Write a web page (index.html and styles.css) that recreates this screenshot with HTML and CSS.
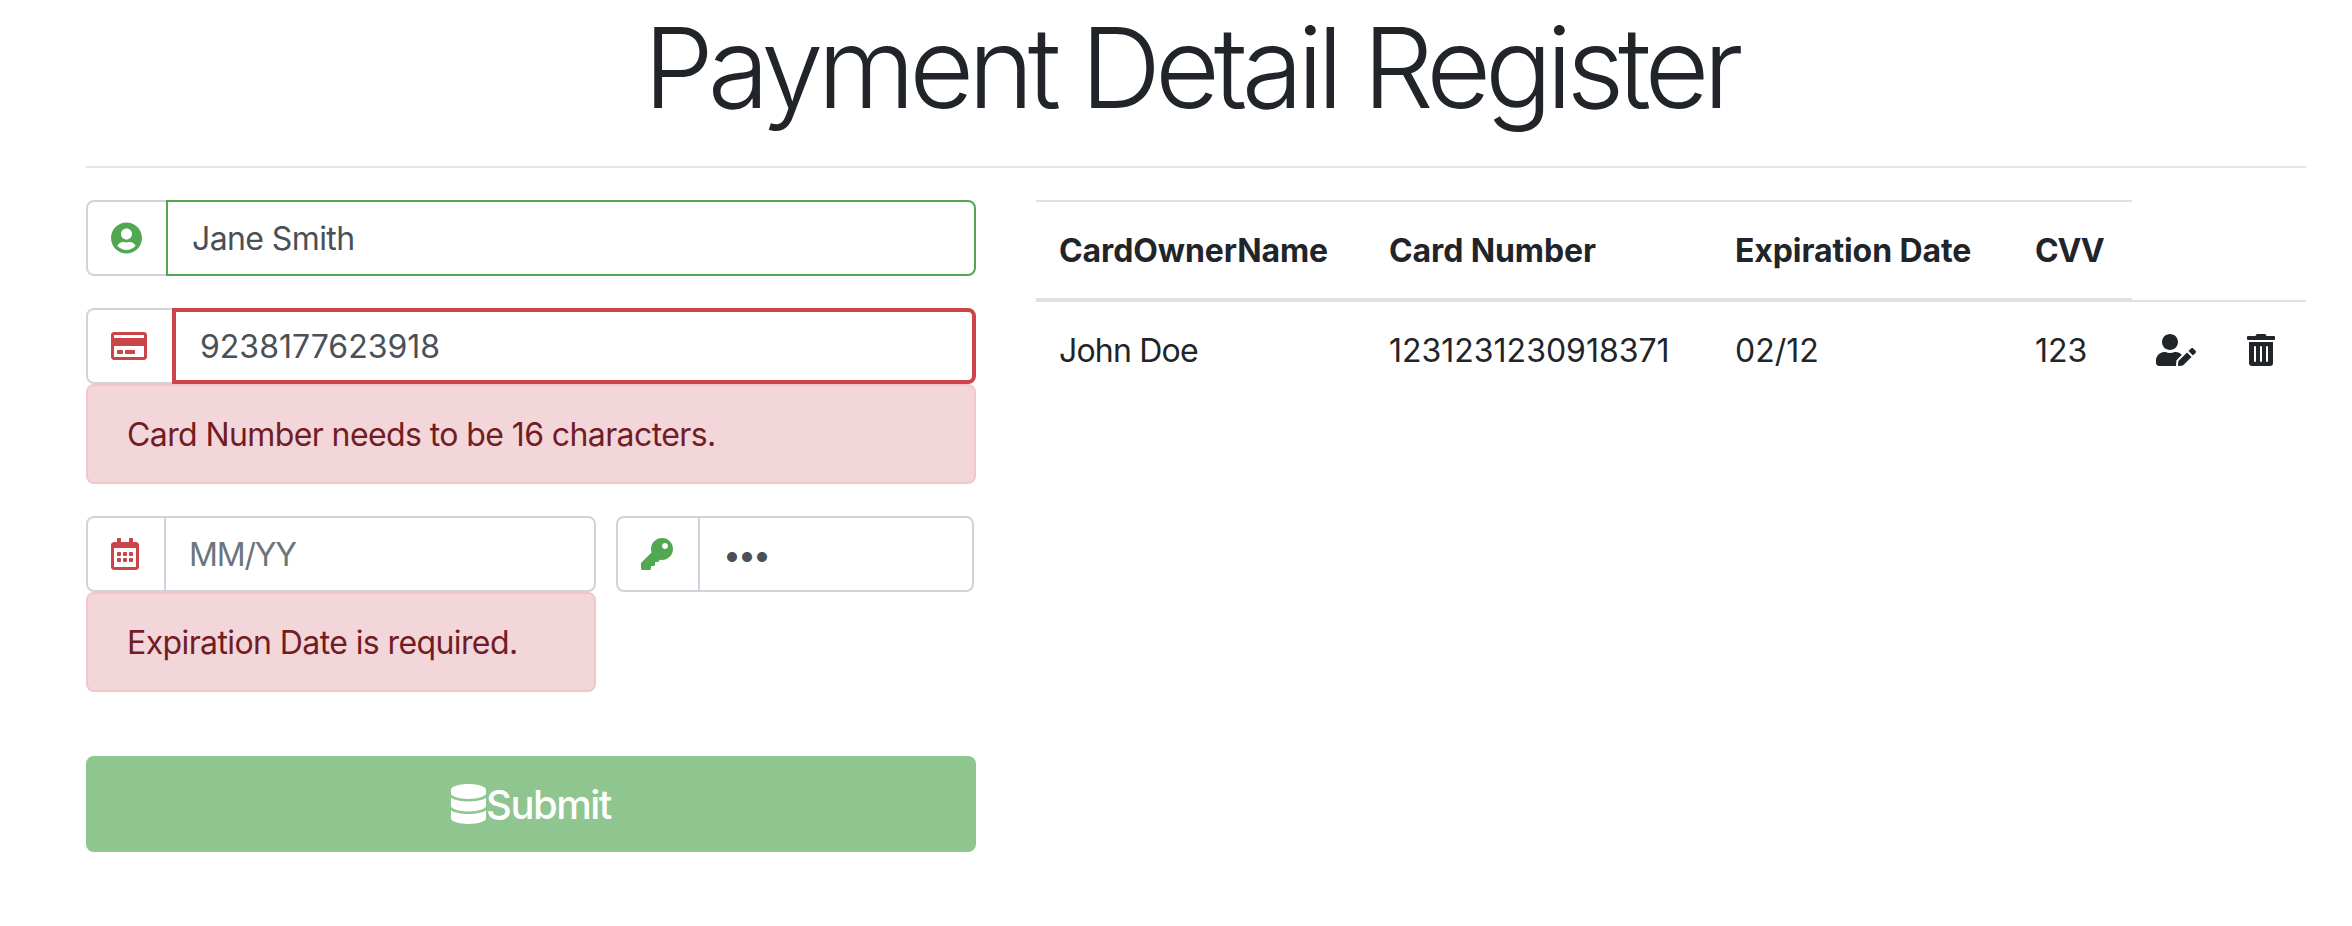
FILE: index.html
```html
<!DOCTYPE html>
<html lang="en">
<head>
    <meta charset="UTF-8">
    <meta name="viewport" content="width=device-width, initial-scale=1.0">
    <title>Payment Detail Register</title>
    <link rel="stylesheet" href="styles.css">
</head>
<body>
    <div class="page">
        <h1>Payment Detail Register</h1>
        <hr>
        <div class="content">
            <form class="payment-form">
                <div class="input-group">
                    <div class="prepend">
                        <svg class="icon green" width="31" height="32" viewBox="0 0 496 512"><path d="M248 8C111 8 0 119 0 256s111 248 248 248 248-111 248-248S385 8 248 8zm0 96c48.6 0 88 39.4 88 88s-39.4 88-88 88-88-39.4-88-88 39.4-88 88-88zm0 344c-58.7 0-111.3-26.6-146.5-68.2 18.8-35.4 55.6-59.8 98.5-59.8 2.4 0 4.8.4 7.1 1.1 13 4.2 26.6 6.9 40.9 6.9 14.3 0 28-2.7 40.9-6.9 2.3-.7 4.7-1.1 7.1-1.1 42.9 0 79.7 24.4 98.5 59.8C359.3 421.4 306.7 448 248 448z"/></svg>
                    </div>
                    <input class="valid" type="text" name="CardOwnerName" value="Jane Smith" placeholder="Full Name">
                </div>

                <div class="input-group spaced">
                    <div class="prepend">
                        <svg class="icon red" width="36" height="32" viewBox="0 0 576 512"><path d="M527.9 32H48.1C21.5 32 0 53.5 0 80v352c0 26.5 21.5 48 48.1 48h479.8c26.6 0 48.1-21.5 48.1-48V80c0-26.5-21.5-48-48.1-48zM54.1 80h467.8c3.3 0 6 2.7 6 6v42H48.1V86c0-3.3 2.7-6 6-6zm467.8 352H54.1c-3.3 0-6-2.7-6-6V256h479.8v170c0 3.3-2.7 6-6 6zM192 332v40c0 6.6-5.4 12-12 12h-72c-6.6 0-12-5.4-12-12v-40c0-6.6 5.4-12 12-12h72c6.6 0 12 5.4 12 12zm192 0v40c0 6.6-5.4 12-12 12H236c-6.6 0-12-5.4-12-12v-40c0-6.6 5.4-12 12-12h136c6.6 0 12 5.4 12 12z"/></svg>
                    </div>
                    <input class="invalid" type="text" name="CardNumber" value="9238177623918" placeholder="16 Digit Card Number">
                </div>
                <div class="alert">Card Number needs to be 16 characters.</div>

                <div class="form-row spaced">
                    <div>
                        <div class="input-group">
                            <div class="prepend">
                                <svg class="icon red" width="28" height="32" viewBox="0 0 448 512"><path d="M148 288h-40c-6.6 0-12-5.4-12-12v-40c0-6.6 5.4-12 12-12h40c6.6 0 12 5.4 12 12v40c0 6.6-5.4 12-12 12zm108-12v-40c0-6.6-5.4-12-12-12h-40c-6.6 0-12 5.4-12 12v40c0 6.6 5.4 12 12 12h40c6.6 0 12-5.4 12-12zm96 0v-40c0-6.6-5.4-12-12-12h-40c-6.6 0-12 5.4-12 12v40c0 6.6 5.4 12 12 12h40c6.6 0 12-5.4 12-12zm-96 96v-40c0-6.6-5.4-12-12-12h-40c-6.6 0-12 5.4-12 12v40c0 6.6 5.4 12 12 12h40c6.6 0 12-5.4 12-12zm-96 0v-40c0-6.6-5.4-12-12-12h-40c-6.6 0-12 5.4-12 12v40c0 6.6 5.4 12 12 12h40c6.6 0 12-5.4 12-12zm192 0v-40c0-6.6-5.4-12-12-12h-40c-6.6 0-12 5.4-12 12v40c0 6.6 5.4 12 12 12h40c6.6 0 12-5.4 12-12zm96-260v352c0 26.5-21.5 48-48 48H48c-26.5 0-48-21.5-48-48V112c0-26.5 21.5-48 48-48h48V12c0-6.6 5.4-12 12-12h40c6.6 0 12 5.4 12 12v52h128V12c0-6.6 5.4-12 12-12h40c6.6 0 12 5.4 12 12v52h48c26.5 0 48 21.5 48 48zm-48 346V160H48v298c0 3.3 2.7 6 6 6h340c3.3 0 6-2.7 6-6z"/></svg>
                            </div>
                            <input type="text" name="ExpirationDate" placeholder="MM/YY">
                        </div>
                        <div class="alert">Expiration Date is required.</div>
                    </div>
                    <div class="input-group">
                        <div class="prepend">
                            <svg class="icon green" width="32" height="32" viewBox="0 0 512 512"><path d="M512 176.001C512 273.203 433.202 352 336 352c-11.22 0-22.19-1.062-32.827-3.069l-24.012 27.014A23.999 23.999 0 0 1 261.223 384H224v40c0 13.255-10.745 24-24 24h-40v40c0 13.255-10.745 24-24 24H24c-13.255 0-24-10.745-24-24v-78.059c0-6.365 2.529-12.47 7.029-16.971l161.802-161.802C163.108 213.814 160 195.271 160 176 160 78.798 238.797.001 335.999 0 433.488-.001 512 78.511 512 176.001zM336 128c0 26.51 21.49 48 48 48s48-21.49 48-48-21.49-48-48-48-48 21.49-48 48z"/></svg>
                        </div>
                        <input type="password" name="CVV" value="123" placeholder="CVV">
                    </div>
                </div>

                <button type="submit">
                    <svg class="icon" width="35" height="40" viewBox="0 0 448 512"><path d="M448 73.143v45.714C448 159.143 347.667 192 224 192S0 159.143 0 118.857V73.143C0 32.857 100.333 0 224 0s224 32.857 224 73.143zM448 176v102.857C448 319.143 347.667 352 224 352S0 319.143 0 278.857V176c48.125 33.143 136.208 48.572 224 48.572S399.874 209.143 448 176zm0 160v102.857C448 479.143 347.667 512 224 512S0 479.143 0 438.857V336c48.125 33.143 136.208 48.572 224 48.572S399.874 369.143 448 336z"/></svg>Submit
                </button>
            </form>

            <table class="cards">
                <colgroup>
                    <col class="col-name">
                    <col class="col-number">
                    <col class="col-date">
                    <col class="col-cvv">
                    <col class="col-edit">
                    <col class="col-delete">
                </colgroup>
                <thead>
                    <tr>
                        <th>CardOwnerName</th>
                        <th>Card Number</th>
                        <th>Expiration Date</th>
                        <th class="tight">CVV</th>
                        <th class="blank"></th>
                        <th class="blank"></th>
                    </tr>
                </thead>
                <tbody>
                    <tr>
                        <td class="owner">John Doe</td>
                        <td>1231231230918371</td>
                        <td>02/12</td>
                        <td>123</td>
                        <td class="action"><svg class="icon" width="40" height="32" viewBox="0 0 640 512"><path d="M224 256c70.7 0 128-57.3 128-128S294.7 0 224 0 96 57.3 96 128s57.3 128 128 128zm89.6 32h-16.7c-22.2 10.2-46.9 16-72.9 16s-50.6-5.8-72.9-16h-16.7C60.2 288 0 348.2 0 422.4V464c0 26.5 21.5 48 48 48h274.9c-2.4-6.8-3.4-14-2.6-21.3l6.8-60.9 1.2-11.1 7.9-7.9 77.3-77.3c-24.5-27.7-60-45.5-99.9-45.5zm45.3 145.3l-6.8 61c-1.1 10.2 7.5 18.8 17.6 17.6l60.9-6.8 137.9-137.9-71.7-71.7-138 137.8zM633 268.9L595.1 231c-9.3-9.3-24.5-9.3-33.8 0l-37.8 37.8-4.1 4.1 71.8 71.7 41.8-41.8c9.3-9.4 9.3-24.5 0-33.9z"/></svg></td>
                        <td class="action"><svg class="icon" width="28" height="32" viewBox="0 0 448 512"><path d="M32 464a48 48 0 0 0 48 48h288a48 48 0 0 0 48-48V128H32zm272-256a16 16 0 0 1 32 0v224a16 16 0 0 1-32 0zm-96 0a16 16 0 0 1 32 0v224a16 16 0 0 1-32 0zm-96 0a16 16 0 0 1 32 0v224a16 16 0 0 1-32 0zM432 32H312l-9.4-18.7A24 24 0 0 0 281.1 0H166.8a23.72 23.72 0 0 0-21.4 13.3L136 32H16A16 16 0 0 0 0 48v32a16 16 0 0 0 16 16h416a16 16 0 0 0 16-16V48a16 16 0 0 0-16-16z"/></svg></td>
                    </tr>
                </tbody>
            </table>
        </div>
    </div>
</body>
</html>
```

FILE: styles.css
```css
* {
    box-sizing: border-box;
}
body {
    font-family: Inter, 'Liberation Sans', sans-serif;
    font-size: 32px;
    line-height: 48px;
    color: #212529;
    background-color: #fff;
    margin: 0;
}
.page {
    padding: 0 46px 0 86px;
}
h1 {
    margin: 0;
    padding-right: 11px;
    font-size: 112px;
    font-weight: 300;
    line-height: 134px;
    letter-spacing: -6.1px;
    text-align: center;
}
hr {
    height: 2px;
    margin: 32px 0;
    border: none;
    background-color: #e5e5e5;
}
.content {
    display: grid;
    grid-template-columns: 890px 1270px;
    column-gap: 60px;
    align-items: start;
}
.icon {
    display: block;
    fill: currentColor;
}
.green {
    color: #52a852;
}
.red {
    color: #cb444a;
}
.input-group {
    display: flex;
    height: 76px;
}
.spaced {
    margin-top: 32px;
}
.prepend {
    display: flex;
    align-items: center;
    flex-shrink: 0;
    padding: 0 25px 0 23px;
    background-color: #fff;
    border: 2px solid #ced4da;
    border-radius: 8px 0 0 8px;
}
input {
    flex: 1;
    min-width: 0;
    margin-left: -2px;
    padding: 1px 24px 0 23px;
    font-family: inherit;
    font-size: 32px;
    letter-spacing: -0.6px;
    color: #495057;
    background-color: #fff;
    border: 2px solid #ced4da;
    border-radius: 0 8px 8px 0;
    outline: none;
}
input::placeholder {
    color: #6c757d;
    letter-spacing: -1.2px;
}
input[type="password"] {
    letter-spacing: -3px;
}
input.valid {
    margin-left: -3px;
    padding-left: 24px;
    border-color: #52a852;
}
input.invalid {
    padding-left: 24px;
    letter-spacing: 0;
    border: 4px solid #cb444a;
}
.alert {
    padding: 25px 40px 23px 39px;
    letter-spacing: -0.6px;
    color: #721c24;
    background-color: #f3d6d9;
    border: 2px solid #f1c7cb;
    border-radius: 8px;
}
.form-row {
    display: grid;
    grid-template-columns: 510px 358px;
    column-gap: 20px;
    align-items: start;
}
button {
    display: flex;
    justify-content: center;
    align-items: center;
    width: 100%;
    height: 96px;
    margin-top: 64px;
    font-family: inherit;
    font-size: 40px;
    font-weight: 500;
    letter-spacing: -1.5px;
    color: #fff;
    background-color: #8fc58f;
    border: none;
    border-radius: 8px;
}
.cards {
    width: 1270px;
    table-layout: fixed;
    border-collapse: separate;
    border-spacing: 0;
}
.col-name { width: 329px; }
.col-number { width: 346px; }
.col-date { width: 300px; }
.col-cvv { width: 121px; }
.col-edit { width: 91px; }
.col-delete { width: 83px; }
th, td {
    padding: 25px 24px 23px;
    text-align: left;
    white-space: nowrap;
}
th:first-child, td:first-child {
    padding-left: 23px;
}
th {
    font-weight: 700;
    letter-spacing: -0.1px;
    border-top: 2px solid #dee2e6;
    border-bottom: 4px solid #dee2e6;
}
th.tight {
    letter-spacing: -1.2px;
}
th.blank {
    border-top: none;
    border-bottom-width: 2px;
}
td.owner {
    letter-spacing: -0.8px;
}
td.action {
    padding: 24px;
}
```
